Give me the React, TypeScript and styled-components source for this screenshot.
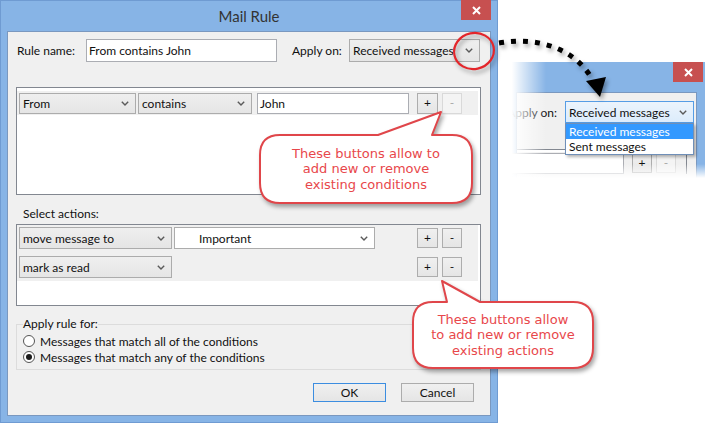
import styled, { createGlobalStyle } from 'styled-components';

const UI_FONT = `Lato, "Noto Sans", sans-serif`;
const NOTE_FONT = `"DejaVu Sans", Verdana, sans-serif`;

const GlobalStyle = createGlobalStyle`
  html, body {
    margin: 0;
    padding: 0;
    background: #fff;
  }
  body {
    font-family: ${UI_FONT};
    font-size: 12px;
    color: #111;
  }
`;

const Chevron = () => (
  <svg width="8" height="5" viewBox="0 0 8 5">
    <path d="M0.8 0.8 L4 4 L7.2 0.8" fill="none" stroke="#5a5a5a" strokeWidth="1.4" />
  </svg>
);

const CloseGlyph = () => (
  <svg width="9" height="9" viewBox="0 0 9 9">
    <path d="M1 1 L8 8 M8 1 L1 8" stroke="#fff" strokeWidth="2" />
  </svg>
);

// ---------- canvas ----------

const Canvas = styled.div`
  position: relative;
  width: 712px;
  height: 423px;
  overflow: hidden;
  background: #fff;
`;

// ---------- main dialog ----------

const Window = styled.div`
  width: 498px;
  height: 423px;
  box-sizing: border-box;
  background: #87b4e6;
  border: 1px solid #6f9bd2;
  display: flex;
  flex-direction: column;
`;

const TitleBar = styled.div`
  height: 30px;
  display: grid;
  grid-template-columns: 1fr auto 1fr;
  padding: 0 6px;
`;

const Title = styled.div`
  grid-column: 2;
  align-self: center;
  font-size: 15px;
  color: #333;
  padding-bottom: 1px;
`;

const CloseButton = styled.div<{ $width: number }>`
  grid-column: 3;
  justify-self: end;
  align-self: start;
  width: ${({ $width }) => $width}px;
  height: 20px;
  margin-top: -1px;
  background: #c75050;
  display: flex;
  align-items: center;
  justify-content: center;
`;

const Client = styled.div`
  flex: 1;
  margin: 0 6px 6px;
  background: #f0f0f0;
  border: 1px solid #7a98bf;
  display: flex;
  flex-direction: column;
  padding-top: 7px;
`;

const TopRow = styled.div`
  display: flex;
  align-items: center;
  height: 23px;
  padding-left: 9px;
`;

const FieldLabel = styled.span<{ $width: number }>`
  width: ${({ $width }) => $width}px;
  flex: none;
  white-space: nowrap;
`;

const TextBox = styled.div<{ $width: number; $height: number }>`
  width: ${({ $width }) => $width}px;
  height: ${({ $height }) => $height}px;
  box-sizing: border-box;
  flex: none;
  border: 1px solid #abadb3;
  background: #fff;
  padding-left: 2px;
  display: flex;
  align-items: center;
  white-space: nowrap;
  overflow: hidden;
`;

const ComboBox = styled.div<{ $width: number; $height: number; $tone?: 'gray' | 'white' | 'focus'; $indent?: number }>`
  position: relative;
  width: ${({ $width }) => $width}px;
  height: ${({ $height }) => $height}px;
  box-sizing: border-box;
  flex: none;
  display: flex;
  align-items: center;
  justify-content: space-between;
  padding: 0 6px 0 ${({ $indent = 3 }) => $indent}px;
  white-space: nowrap;
  border: 1px solid ${({ $tone }) => ($tone === 'focus' ? '#569de5' : '#acacac')};
  background: ${({ $tone }) =>
    $tone === 'white'
      ? '#fff'
      : $tone === 'focus'
      ? 'linear-gradient(#ecf4fc, #dcecfc)'
      : 'linear-gradient(#efefef, #e5e5e5)'};
`;

const SmallButton = styled.div<{ $width: number; $height: number; $disabled?: boolean }>`
  width: ${({ $width }) => $width}px;
  height: ${({ $height }) => $height}px;
  box-sizing: border-box;
  flex: none;
  display: flex;
  align-items: center;
  justify-content: center;
  font-size: 12px;
  line-height: 1;
  border: 1px solid ${({ $disabled }) => ($disabled ? '#d9d9d9' : '#adadad')};
  background: ${({ $disabled }) => ($disabled ? '#f4f4f4' : 'linear-gradient(#f0f0f0, #e5e5e5)')};
  color: ${({ $disabled }) => ($disabled ? '#a8a8a8' : '#111')};
`;

const ButtonPair = styled.div`
  margin-left: auto;
  display: flex;
  gap: 4px;
`;

const ListBox = styled.div<{ $height: number }>`
  margin-left: 8px;
  width: 465px;
  height: ${({ $height }) => $height}px;
  box-sizing: border-box;
  flex: none;
  border: 1px solid #828790;
  background: #fff;
`;

const ConditionBox = styled(ListBox)`
  margin-top: 25px;
  padding: 3px 2px 0 0;
`;

const ActionBox = styled(ListBox)`
  padding: 0 2px 0 0;
`;

const EditorRow = styled.div<{ $height: number }>`
  height: ${({ $height }) => $height}px;
  display: flex;
  align-items: center;
  padding: 0 16px 0 2px;
`;

const ConditionRow = styled(EditorRow)`
  background: #f0f0f0;
`;

const ActionList = styled.div`
  background: #f0f0f0;
  padding: 2px 0 3px;
  display: flex;
  flex-direction: column;
  gap: 7px;
`;

const SectionLabel = styled.div`
  margin: 11px 0 2px 15px;
  line-height: 16px;
`;

const GroupBox = styled.fieldset`
  margin: 10px 0 0 8px;
  width: 465px;
  box-sizing: border-box;
  border: 1px solid #dcdcdc;
  padding: 1px 6px 4px;
`;

const GroupLegend = styled.legend`
  padding: 0;
  line-height: 16px;
`;

const RadioRow = styled.label`
  display: flex;
  align-items: center;
  gap: 5px;
  height: 16px;
  white-space: nowrap;
`;

const RadioMark = styled.span<{ $checked?: boolean }>`
  width: 12px;
  height: 12px;
  box-sizing: border-box;
  border-radius: 50%;
  border: 1px solid #555;
  background: #fff;
  display: flex;
  align-items: center;
  justify-content: center;
  &::after {
    content: '';
    width: 6px;
    height: 6px;
    border-radius: 50%;
    background: ${({ $checked }) => ($checked ? '#1c1c1c' : 'transparent')};
  }
`;

const Footer = styled.div`
  display: flex;
  justify-content: flex-end;
  gap: 15px;
  padding: 13px 16px 0 0;
`;

const DialogButton = styled.div<{ $primary?: boolean }>`
  width: 73px;
  height: 19px;
  box-sizing: border-box;
  display: flex;
  align-items: center;
  justify-content: center;
  border: 1px solid ${({ $primary }) => ($primary ? '#3c8de0' : '#acacac')};
  background: linear-gradient(#f0f0f0, #e5e5e5);
`;

// ---------- inset (dropdown opened) ----------

const InsetWindow = styled.div`
  position: absolute;
  left: 508px;
  top: 62px;
  width: 197px;
  height: 116px;
  overflow: hidden;
  background: #87b4e6;
  display: flex;
  flex-direction: column;
`;

const InsetTitle = styled.div`
  height: 30px;
  flex: none;
  display: flex;
  justify-content: flex-end;
  padding-right: 2px;
`;

const InsetClose = styled.div`
  width: 30px;
  height: 20px;
  background: #c75050;
  display: flex;
  align-items: center;
  justify-content: center;
`;

const InsetClient = styled.div`
  flex: 1;
  margin: 0 8px;
  background: #f0f0f0;
  border: 1px solid #7a98bf;
  border-bottom: none;
  padding-top: 8px;
`;

const InsetRow = styled.div`
  display: flex;
  justify-content: flex-end;
  align-items: center;
  gap: 8px;
  padding-right: 2px;
  white-space: nowrap;
`;

const DropWrap = styled.div`
  position: relative;
`;

const DropList = styled.div`
  position: absolute;
  left: 0;
  top: 100%;
  width: 129px;
  box-sizing: border-box;
  border: 1px solid #6f8fb8;
  background: #fff;
  box-shadow: 2px 2px 3px rgba(0, 0, 0, 0.3);
  z-index: 2;
`;

const DropItem = styled.div<{ $selected?: boolean }>`
  height: 15px;
  line-height: 15px;
  padding-left: 3px;
  background: ${({ $selected }) => ($selected ? '#3399ff' : '#fff')};
  color: ${({ $selected }) => ($selected ? '#fff' : '#111')};
`;

const InsetCondBox = styled.div`
  margin: 26px 9px 0 0;
  border-top: 1px solid #828790;
  border-right: 1px solid #828790;
  background: #fff;
  padding-top: 2px;
`;

const InsetCondRow = styled.div`
  display: flex;
  align-items: center;
  gap: 4px;
  height: 22px;
  padding-right: 10px;
  justify-content: flex-end;
  background: #f0f0f0;
`;

const InsetInput = styled(TextBox)`
  margin-right: 4px;
`;

const FadeLeft = styled.div`
  position: absolute;
  left: 0;
  top: 0;
  bottom: 0;
  width: 38px;
  background: linear-gradient(to right, #fff 10%, rgba(255, 255, 255, 0));
  z-index: 3;
`;

const FadeBottom = styled.div`
  position: absolute;
  left: 0;
  right: 0;
  bottom: 0;
  height: 14px;
  background: linear-gradient(rgba(255, 255, 255, 0), #fff);
  z-index: 3;
`;

// ---------- annotations ----------

const Annotations = styled.svg`
  position: absolute;
  left: 0;
  top: 0;
  pointer-events: none;
  overflow: visible;
`;

const CalloutBox = styled.div<{ $left: number; $top: number; $width: number; $height: number }>`
  position: absolute;
  left: ${({ $left }) => $left}px;
  top: ${({ $top }) => $top}px;
  width: ${({ $width }) => $width}px;
  height: ${({ $height }) => $height}px;
  pointer-events: none;
  svg {
    position: absolute;
    inset: 0;
    overflow: visible;
    filter: drop-shadow(2px 3px 2px rgba(0, 0, 0, 0.35));
  }
`;

const CalloutText = styled.div<{ $x: number; $y: number; $w: number; $h: number }>`
  position: absolute;
  left: ${({ $x }) => $x}px;
  top: ${({ $y }) => $y}px;
  width: ${({ $w }) => $w}px;
  height: ${({ $h }) => $h}px;
  display: flex;
  flex-direction: column;
  align-items: center;
  justify-content: center;
  font-family: ${NOTE_FONT};
  font-size: 13px;
  line-height: 15.5px;
  color: #e8474b;
  text-align: center;
  white-space: nowrap;
`;

type Rect = [number, number, number, number];
type Tail = { left: number; right: number; tipX: number; tipY: number };

const bubblePath = ([x0, y0, x1, y1]: Rect, t: Tail, r = 20) =>
  [
    `M ${x0 + r} ${y0}`,
    `L ${t.left} ${y0}`,
    `L ${t.tipX} ${t.tipY}`,
    `L ${t.right} ${y0}`,
    `L ${x1 - r} ${y0}`,
    `Q ${x1} ${y0} ${x1} ${y0 + r}`,
    `L ${x1} ${y1 - r}`,
    `Q ${x1} ${y1} ${x1 - r} ${y1}`,
    `L ${x0 + r} ${y1}`,
    `Q ${x0} ${y1} ${x0} ${y1 - r}`,
    `L ${x0} ${y0 + r}`,
    `Q ${x0} ${y0} ${x0 + r} ${y0}`,
    'Z',
  ].join(' ');

type CalloutProps = {
  left: number;
  top: number;
  width: number;
  height: number;
  rect: Rect;
  tail: Tail;
  lines: string[];
};

const Callout = ({ left, top, width, height, rect, tail, lines }: CalloutProps) => (
  <CalloutBox $left={left} $top={top} $width={width} $height={height}>
    <svg width={width} height={height}>
      <path d={bubblePath(rect, tail)} fill="#fff" stroke="#e0464a" strokeWidth="2" strokeLinejoin="round" />
    </svg>
    <CalloutText $x={rect[0]} $y={rect[1]} $w={rect[2] - rect[0]} $h={rect[3] - rect[1]}>
      {lines.map((line) => (
        <span key={line}>{line}</span>
      ))}
    </CalloutText>
  </CalloutBox>
);

export default function App() {
  return (
    <>
      <GlobalStyle />
      <Canvas>
        <Window>
          <TitleBar>
            <Title>Mail Rule</Title>
            <CloseButton $width={30}>
              <CloseGlyph />
            </CloseButton>
          </TitleBar>
          <Client>
            <TopRow>
              <FieldLabel $width={69}>Rule name:</FieldLabel>
              <TextBox $width={191} $height={23}>From contains John</TextBox>
              <FieldLabel $width={57} style={{ marginLeft: 15 }}>
                Apply on:
              </FieldLabel>
              <ComboBox $width={131} $height={23}>
                Received messages
                <Chevron />
              </ComboBox>
            </TopRow>

            <ConditionBox $height={108}>
              <ConditionRow $height={24}>
                <ComboBox $width={117} $height={21}>
                  From
                  <Chevron />
                </ComboBox>
                <ComboBox $width={114} $height={21} style={{ marginLeft: 2 }}>
                  contains
                  <Chevron />
                </ComboBox>
                <TextBox $width={152} $height={21} style={{ marginLeft: 5 }}>
                  John
                </TextBox>
                <ButtonPair>
                  <SmallButton $width={21} $height={21}>+</SmallButton>
                  <SmallButton $width={20} $height={21} $disabled>
                    -
                  </SmallButton>
                </ButtonPair>
              </ConditionRow>
            </ConditionBox>

            <SectionLabel>Select actions:</SectionLabel>
            <ActionBox $height={82}>
              <ActionList>
                <EditorRow $height={22}>
                  <ComboBox $width={153} $height={22}>
                    move message to
                    <Chevron />
                  </ComboBox>
                  <ComboBox $width={201} $height={22} $tone="white" $indent={24} style={{ marginLeft: 2 }}>
                    Important
                    <Chevron />
                  </ComboBox>
                  <ButtonPair>
                    <SmallButton $width={21} $height={20}>+</SmallButton>
                    <SmallButton $width={20} $height={20}>-</SmallButton>
                  </ButtonPair>
                </EditorRow>
                <EditorRow $height={22}>
                  <ComboBox $width={153} $height={22}>
                    mark as read
                    <Chevron />
                  </ComboBox>
                  <ButtonPair>
                    <SmallButton $width={21} $height={20}>+</SmallButton>
                    <SmallButton $width={20} $height={20}>-</SmallButton>
                  </ButtonPair>
                </EditorRow>
              </ActionList>
            </ActionBox>

            <GroupBox>
              <GroupLegend>Apply rule for:</GroupLegend>
              <RadioRow>
                <RadioMark />
                Messages that match all of the conditions
              </RadioRow>
              <RadioRow>
                <RadioMark $checked />
                Messages that match any of the conditions
              </RadioRow>
            </GroupBox>

            <Footer>
              <DialogButton $primary>OK</DialogButton>
              <DialogButton>Cancel</DialogButton>
            </Footer>
          </Client>
        </Window>

        <InsetWindow>
          <InsetTitle>
            <InsetClose>
              <CloseGlyph />
            </InsetClose>
          </InsetTitle>
          <InsetClient>
            <InsetRow>
              <span>Apply on:</span>
              <DropWrap>
                <ComboBox $width={129} $height={22} $tone="focus">
                  Received messages
                  <Chevron />
                </ComboBox>
                <DropList>
                  <DropItem $selected>Received messages</DropItem>
                  <DropItem>Sent messages</DropItem>
                </DropList>
              </DropWrap>
            </InsetRow>
            <InsetCondBox>
              <InsetCondRow>
                <InsetInput $width={120} $height={21} />
                <SmallButton $width={20} $height={19}>+</SmallButton>
                <SmallButton $width={20} $height={19} $disabled>
                  -
                </SmallButton>
              </InsetCondRow>
            </InsetCondBox>
          </InsetClient>
          <FadeLeft />
          <FadeBottom />
        </InsetWindow>

        <Annotations width="712" height="423" viewBox="0 0 712 423">
          <g style={{ filter: 'drop-shadow(2px 3px 2px rgba(0,0,0,0.35))' }}>
            <ellipse cx="474" cy="51" rx="20" ry="18" fill="none" stroke="#e3262b" strokeWidth="2.2" transform="rotate(-12 474 51)" />
            <path
              d="M 499 43 C 540 36, 576 50, 592 79"
              fill="none"
              stroke="#000"
              strokeWidth="5"
              strokeDasharray="5 7"
            />
            <polygon points="586,81 606,77 600,97" fill="#000" />
          </g>
        </Annotations>

        <Callout
          left={255}
          top={108}
          width={225}
          height={102}
          rect={[5, 27, 217, 95]}
          tail={{ left: 123, right: 177, tipX: 186, tipY: 4 }}
          lines={['These buttons allow to', 'add new or remove', 'existing conditions']}
        />
        <Callout
          left={408}
          top={277}
          width={195}
          height={98}
          rect={[5, 25, 185, 91]}
          tail={{ left: 39, right: 72, tipX: 34, tipY: 4 }}
          lines={['These buttons allow', 'to add new or remove', 'existing actions']}
        />
      </Canvas>
    </>
  );
}
